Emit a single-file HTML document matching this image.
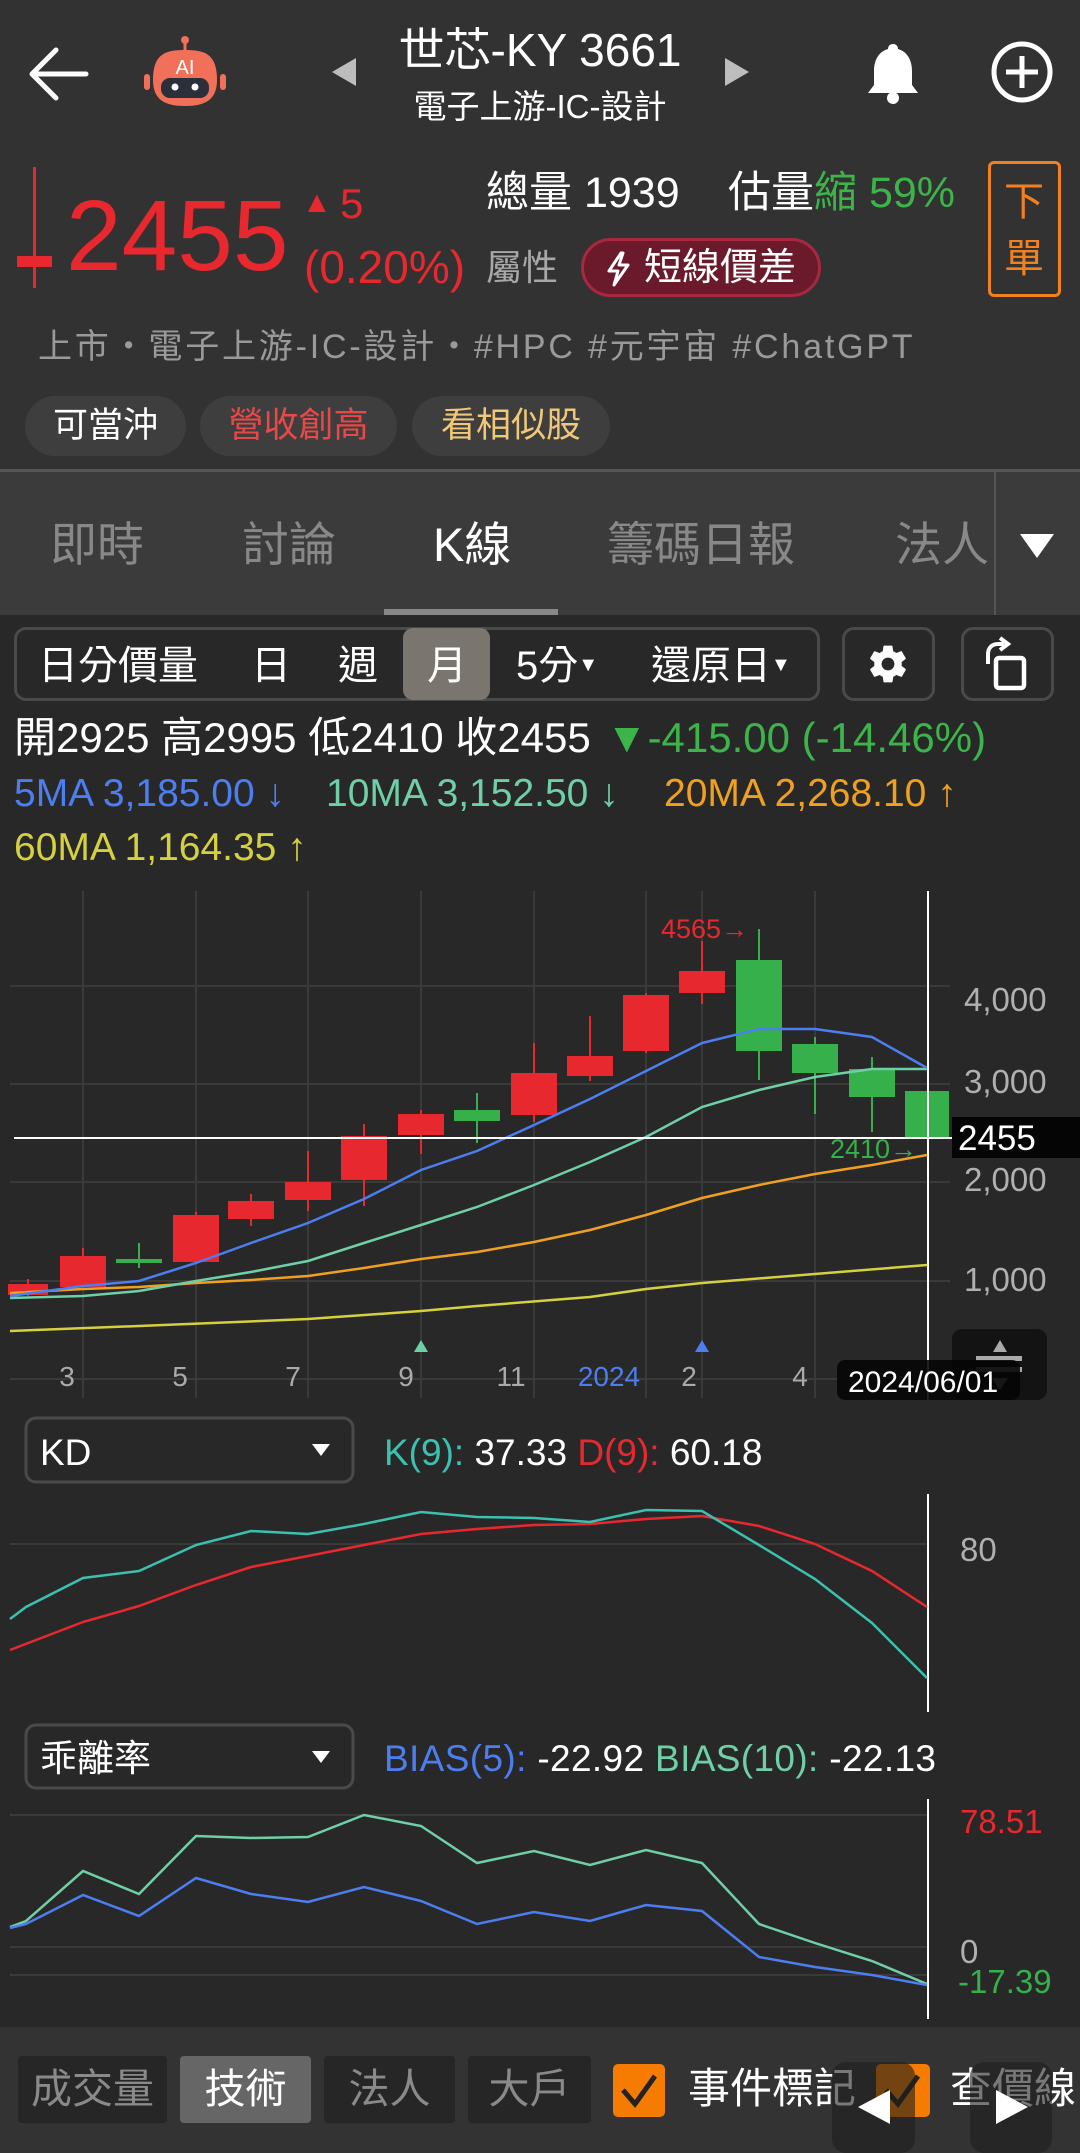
<!DOCTYPE html>
<html><head><meta charset="utf-8">
<style>
*{margin:0;padding:0;box-sizing:border-box}
body{width:1080px;height:2153px;background:#282828;position:relative;overflow:hidden;font-family:"Liberation Sans","Noto Sans CJK TC",sans-serif;color:#fff}
.a{position:absolute;line-height:1;white-space:nowrap}
.top{position:absolute;left:0;top:0;width:1080px;height:470px;background:#323232}
.tabs{position:absolute;left:0;top:469px;width:1080px;height:146px;background:#3b3b3b;border-top:3px solid #555}
.chip{position:absolute;top:396px;height:60px;border-radius:30px;background:#3e3e3e;font-size:35px;line-height:60px;text-align:center}
.box{position:absolute;border:3px solid #4a4a4a;border-radius:12px}
.bb{position:absolute;top:2056px;height:67px;background:#262626;border-radius:4px;font-size:41px;line-height:67px;text-align:center;color:#8a8a8a}
</style></head><body>
<div class="top"></div>
<svg class="a" style="left:26px;top:46px" width="64" height="56" viewBox="0 0 64 56"><path d="M60 28H8M30 4L6 28L30 52" stroke="#fff" stroke-width="5" fill="none" stroke-linecap="round" stroke-linejoin="round"/></svg>
<svg class="a" style="left:140px;top:34px" width="90" height="80" viewBox="0 0 90 80">
<line x1="45" y1="6" x2="45" y2="18" stroke="#f0705a" stroke-width="3"/><circle cx="45" cy="6" r="4" fill="#f0705a"/>
<rect x="4" y="40" width="6" height="16" rx="3" fill="#f0705a"/><rect x="80" y="40" width="6" height="16" rx="3" fill="#f0705a"/>
<path d="M13 46 C13 20 25 16 45 16 C65 16 77 20 77 46 C77 66 65 72 45 72 C25 72 13 66 13 46Z" fill="#f0705a"/>
<rect x="21" y="44" width="48" height="20" rx="9" fill="#2b2f3a"/><circle cx="35" cy="53" r="3.5" fill="#fff"/><circle cx="55" cy="53" r="3.5" fill="#fff"/>
<text x="45" y="40" font-size="20" fill="#fff" text-anchor="middle" font-family="Liberation Sans">AI</text></svg>
<svg class="a" style="left:330px;top:56px" width="28" height="32"><path d="M26 2L2 16L26 30Z" fill="#bdbdbd"/></svg>
<svg class="a" style="left:723px;top:56px" width="28" height="32"><path d="M2 2L26 16L2 30Z" fill="#bdbdbd"/></svg>
<div class="a" style="left:380px;width:320px;text-align:center;top:27px;font-size:46px">世芯-KY 3661</div>
<div class="a" style="left:380px;width:320px;text-align:center;top:90px;font-size:33px">電子上游-IC-設計</div>
<svg class="a" style="left:864px;top:40px" width="58" height="66" viewBox="0 0 58 66"><path d="M29 4c3 0 5 2 5 5c10 3 14 12 14 22v14l6 8H4l6-8V31c0-10 4-19 14-22c0-3 2-5 5-5z" fill="#fff"/><circle cx="29" cy="58" r="6" fill="#fff"/></svg>
<svg class="a" style="left:990px;top:40px" width="64" height="64"><circle cx="32" cy="32" r="28" stroke="#fff" stroke-width="5" fill="none"/><path d="M32 16V48M16 32H48" stroke="#fff" stroke-width="5"/></svg>

<div class="a" style="left:33px;top:167px;width:3px;height:121px;background:#e8282f"></div>
<div class="a" style="left:17px;top:256px;width:35px;height:11px;background:#e8282f"></div>
<div class="a" style="left:66px;top:186px;font-size:100px;color:#e8282f">2455</div>
<div class="a" style="left:302px;top:188px;font-size:30px;color:#e8282f">▲</div>
<div class="a" style="left:340px;top:183px;font-size:42px;color:#e8282f">5</div>
<div class="a" style="left:304px;top:244px;font-size:46px;color:#e8282f">(0.20%)</div>
<div class="a" style="left:486px;top:250px;font-size:36px;color:#a8a8a8">屬性</div>
<div class="a" style="left:581px;top:238px;width:240px;height:59px;border-radius:30px;background:#6b1a2c;border:3px solid #a8283f"></div>
<svg class="a" style="left:604px;top:251px" width="28" height="36" viewBox="0 0 28 36"><path d="M17 2L5 20H14L10 34L24 14H15L19 2Z" stroke="#fff" stroke-width="3" fill="none" stroke-linejoin="round"/></svg>
<div class="a" style="left:644px;top:249px;font-size:38px">短線價差</div>
<div class="a" style="left:486px;top:172px;font-size:43px">總量 1939</div>
<div class="a" style="left:728px;top:172px;font-size:43px">估量<span style="color:#3cb44a">縮 59%</span></div>
<div class="a" style="left:988px;top:161px;width:73px;height:136px;border:3px solid #f08020;border-radius:6px"></div>
<div class="a" style="left:1004px;top:182px;font-size:40px;color:#f08020">下</div>
<div class="a" style="left:1004px;top:239px;font-size:40px;color:#f08020">單</div>
<div class="a" style="left:38px;top:330px;font-size:34px;letter-spacing:2.8px;color:#9a9a9a">上市・電子上游-IC-設計・#HPC #元宇宙 #ChatGPT</div>
<div class="chip" style="left:25px;width:161px">可當沖</div>
<div class="chip" style="left:200px;width:197px;color:#e84848">營收創高</div>
<div class="chip" style="left:412px;width:198px;color:#f0c878">看相似股</div>

<div class="tabs"></div>
<div class="a" style="left:50px;top:521px;font-size:47px;color:#888">即時</div>
<div class="a" style="left:242px;top:521px;font-size:47px;color:#888">討論</div>
<div class="a" style="left:433px;top:521px;font-size:47px;color:#fff">K線</div>
<div class="a" style="left:607px;top:521px;font-size:47px;color:#888">籌碼日報</div>
<div class="a" style="left:895px;top:521px;font-size:47px;color:#888">法人</div>
<div class="a" style="left:994px;top:471px;width:2px;height:144px;background:#555"></div>
<svg class="a" style="left:1018px;top:532px" width="38" height="28"><path d="M2 2H36L19 26Z" fill="#fff"/></svg>
<div class="a" style="left:384px;top:609px;width:174px;height:6px;background:#888"></div>

<div class="box" style="left:14px;top:627px;width:806px;height:74px"></div>
<div class="a" style="left:403px;top:628px;width:87px;height:72px;background:#7b7570;border-radius:10px"></div>
<div class="a" style="left:38px;top:646px;font-size:40px">日分價量</div>
<div class="a" style="left:251px;top:646px;font-size:40px">日</div>
<div class="a" style="left:338px;top:646px;font-size:40px">週</div>
<div class="a" style="left:427px;top:646px;font-size:40px">月</div>
<div class="a" style="left:516px;top:646px;font-size:40px">5分<span style="font-size:20px;vertical-align:8px">▼</span></div>
<div class="a" style="left:651px;top:646px;font-size:40px">還原日<span style="font-size:20px;vertical-align:8px">▼</span></div>
<div class="box" style="left:842px;top:627px;width:93px;height:74px"></div>
<svg class="a" style="left:866px;top:642px" width="44" height="44" viewBox="0 0 24 24"><path fill="#fff" d="M19.4 13c.04-.33.06-.66.06-1s-.02-.67-.06-1l2.1-1.650c.2-.15.24-.42.12-.64l-2-3.460c-.12-.22-.39-.3-.61-.22l-2.490 1c-.52-.4-1.080-.73-1.690-.98l-.38-2.650C14.460 2.180 14.250 2 14 2h-4c-.25 0-.46.18-.49.42l-.38 2.650c-.61.25-1.170.59-1.690.98l-2.490-1c-.23-.09-.49 0-.61.22l-2 3.460c-.13.22-.07.49.12.64L4.570 11c-.04.33-.07.66-.07 1s.03.67.07 1l-2.110 1.650c-.19.15-.24.42-.12.64l2 3.460c.12.22.39.3.61.22l2.490-1c.52.4 1.080.73 1.690.98l.38 2.650c.03.24.24.42.49.42h4c.25 0 .46-.18.49-.42l.38-2.650c.61-.25 1.170-.59 1.690-.98l2.490 1c.23.09.49 0 .61-.22l2-3.460c.12-.22.07-.49-.12-.64L19.400 13zM12 15.500c-1.930 0-3.500-1.570-3.500-3.500s1.570-3.500 3.500-3.500 3.500 1.570 3.500 3.500-1.570 3.500-3.500 3.500z"/></svg>
<div class="box" style="left:961px;top:627px;width:93px;height:74px"></div>
<svg class="a" style="left:982px;top:636px" width="52" height="56" viewBox="0 0 52 56"><rect x="14" y="22" width="28" height="30" rx="3" stroke="#fff" stroke-width="4.5" fill="none"/><path d="M6 28V18C6 12 10 8 16 8H22" stroke="#fff" stroke-width="4" fill="none"/><path d="M18 2L26 8L18 14" stroke="#fff" stroke-width="4" fill="none"/></svg>

<div class="a" style="left:14px;top:717px;font-size:42px">開2925 高2995 低2410 收2455</div>
<div class="a" style="left:606px;top:717px;font-size:42px;color:#3cb44a">▼-415.00 (-14.46%)</div>
<div class="a" style="left:14px;top:774px;font-size:39px;color:#4d7ef0">5MA 3,185.00 ↓</div>
<div class="a" style="left:326px;top:774px;font-size:39px;color:#6fcfa6">10MA 3,152.50 ↓</div>
<div class="a" style="left:664px;top:774px;font-size:39px;color:#f0a020">20MA 2,268.10 ↑</div>
<div class="a" style="left:14px;top:828px;font-size:39px;color:#d4d040">60MA 1,164.35 ↑</div>

<svg class="a" style="left:0;top:0" width="1080" height="2153" viewBox="0 0 1080 2153" font-family="Liberation Sans">
<g stroke="#3a3a3a" stroke-width="2">
<line x1="83" y1="891" x2="83" y2="1398"/><line x1="196" y1="891" x2="196" y2="1398"/><line x1="308" y1="891" x2="308" y2="1398"/><line x1="421" y1="891" x2="421" y2="1398"/><line x1="534" y1="891" x2="534" y2="1398"/><line x1="646" y1="891" x2="646" y2="1398"/><line x1="702" y1="891" x2="702" y2="1398"/><line x1="815" y1="891" x2="815" y2="1398"/>
<line x1="10" y1="986" x2="950" y2="986"/><line x1="10" y1="1084" x2="950" y2="1084"/><line x1="10" y1="1182" x2="950" y2="1182"/><line x1="10" y1="1281" x2="950" y2="1281"/><line x1="10" y1="1379" x2="950" y2="1379"/>
<line x1="10" y1="1544" x2="928" y2="1544"/>
<line x1="10" y1="1815" x2="928" y2="1815"/><line x1="10" y1="1947" x2="928" y2="1947"/><line x1="10" y1="1975" x2="928" y2="1975"/>
</g>
<g stroke-width="2">
<g fill="#e8282f" stroke="#e8282f">
<line x1="28" y1="1279" x2="28" y2="1296"/><rect x="9" y="1285" width="38" height="9"/>
<line x1="83" y1="1248" x2="83" y2="1286"/><rect x="61" y="1257" width="44" height="29"/>
<line x1="196" y1="1212" x2="196" y2="1261"/><rect x="174" y="1216" width="44" height="45"/>
<line x1="251" y1="1194" x2="251" y2="1226"/><rect x="229" y="1202" width="44" height="16"/>
<line x1="308" y1="1151" x2="308" y2="1211"/><rect x="286" y="1183" width="44" height="16"/>
<line x1="364" y1="1124" x2="364" y2="1206"/><rect x="342" y="1137" width="44" height="42"/>
<line x1="421" y1="1110" x2="421" y2="1154"/><rect x="399" y="1115" width="44" height="19"/>
<line x1="534" y1="1043" x2="534" y2="1122"/><rect x="512" y="1074" width="44" height="40"/>
<line x1="590" y1="1016" x2="590" y2="1081"/><rect x="568" y="1057" width="44" height="18"/>
<line x1="646" y1="993" x2="646" y2="1053"/><rect x="624" y="996" width="44" height="54"/>
<line x1="702" y1="941" x2="702" y2="1004"/><rect x="680" y="972" width="44" height="20"/>
</g>
<g fill="#36b04a" stroke="#36b04a">
<line x1="139" y1="1243" x2="139" y2="1268"/><rect x="117" y="1260" width="44" height="2"/>
<line x1="477" y1="1093" x2="477" y2="1143"/><rect x="455" y="1111" width="44" height="9"/>
<line x1="759" y1="929" x2="759" y2="1080"/><rect x="737" y="961" width="44" height="89"/>
<line x1="815" y1="1037" x2="815" y2="1114"/><rect x="793" y="1045" width="44" height="27"/>
<line x1="872" y1="1057" x2="872" y2="1132"/><rect x="850" y="1070" width="44" height="26"/>
<rect x="906" y="1092" width="42" height="45"/>
</g></g>
<g fill="none" stroke-width="2.5">
<polyline stroke="#d4d040" points="10,1331 139,1326 308,1319 421,1311 477,1306 590,1297 646,1289 702,1283 927,1265"/>
<polyline stroke="#f0a020" points="10,1293 83,1289 139,1287 196,1283 251,1280 308,1276 364,1268 421,1259 477,1252 534,1242 590,1230 646,1215 702,1198 759,1185 815,1174 872,1165 927,1155"/>
<polyline stroke="#6fcfa6" points="10,1298 83,1296 139,1291 196,1281 251,1272 308,1261 364,1243 421,1225 477,1207 534,1185 590,1162 646,1137 702,1107 759,1090 815,1077 872,1069 927,1069"/>
<polyline stroke="#4d7ef0" points="10,1296 83,1286 139,1281 196,1263 251,1243 308,1223 364,1199 421,1170 477,1151 534,1125 590,1099 646,1071 702,1043 759,1029 815,1029 872,1037 927,1068"/>
</g>
<line x1="14" y1="1138" x2="952" y2="1138" stroke="#fff" stroke-width="2"/>
<line x1="928" y1="891" x2="928" y2="1400" stroke="#fff" stroke-width="2"/>
<text x="661" y="938" font-size="27" fill="#e8282f">4565→</text>
<text x="830" y="1158" font-size="27" fill="#36b04a">2410→</text>
<path d="M414 1352L421 1340L428 1352Z" fill="#6fcfa6"/><path d="M695 1352L702 1340L709 1352Z" fill="#4d7ef0"/>
<g font-size="33" fill="#b0b0b0"><text x="964" y="1011">4,000</text><text x="964" y="1093">3,000</text><text x="964" y="1191">2,000</text><text x="964" y="1291">1,000</text></g>
<rect x="952" y="1117" width="128" height="41" fill="#050505"/><text x="958" y="1150" font-size="35" fill="#fff">2455</text>
<g font-size="28" fill="#aaa" text-anchor="middle"><text x="67" y="1386">3</text><text x="180" y="1386">5</text><text x="293" y="1386">7</text><text x="406" y="1386">9</text><text x="511" y="1386">11</text><text x="609" y="1386" fill="#4d7ef0">2024</text><text x="689" y="1386">2</text><text x="800" y="1386">4</text></g>
<rect x="952" y="1329" width="95" height="71" rx="10" fill="#111" opacity="0.9"/>
<path d="M993 1352L1000 1340L1007 1352Z M1008 1378L1000 1390L992 1378Z" fill="#aaa"/>
<rect x="976" y="1356" width="46" height="5" fill="#aaa"/><rect x="976" y="1367" width="46" height="5" fill="#aaa"/>
<rect x="837" y="1360" width="183" height="40" rx="8" fill="#050505" opacity="0.9"/>
<text x="848" y="1392" font-size="30" fill="#fff">2024/06/01</text>

<rect x="26" y="1418" width="327" height="64" rx="10" fill="none" stroke="#4a4a4a" stroke-width="3"/>
<text x="40" y="1465" font-size="37" fill="#fff">KD</text>
<path d="M312 1444H330L321 1456Z" fill="#fff"/>
<text x="384" y="1465" font-size="37" fill="#fff"><tspan fill="#3cc0b0">K(9):</tspan> 37.33 <tspan fill="#e8282f">D(9):</tspan> 60.18</text>
<line x1="928" y1="1494" x2="928" y2="1712" stroke="#fff" stroke-width="2"/>
<text x="960" y="1561" font-size="33" fill="#b0b0b0">80</text>
<polyline fill="none" stroke="#e8282f" stroke-width="2.5" points="10,1650 83,1622 139,1606 196,1585 251,1567 308,1556 364,1545 421,1534 477,1529 534,1525 590,1524 646,1519 702,1516 759,1526 815,1544 872,1571 927,1607"/>
<polyline fill="none" stroke="#3cc0b0" stroke-width="2.5" points="10,1619 26,1607 83,1578 139,1571 196,1545 251,1531 308,1534 364,1524 421,1512 477,1517 534,1518 590,1522 646,1510 702,1511 759,1545 815,1579 872,1623 927,1678"/>

<rect x="26" y="1725" width="327" height="63" rx="10" fill="none" stroke="#4a4a4a" stroke-width="3"/>
<text x="40" y="1771" font-size="37" fill="#fff" font-family="Liberation Sans,Noto Sans CJK TC">乖離率</text>
<path d="M312 1751H330L321 1763Z" fill="#fff"/>
<text x="384" y="1771" font-size="37" fill="#fff" textLength="552" lengthAdjust="spacing"><tspan fill="#4d7ef0">BIAS(5):</tspan>  -22.92 <tspan fill="#6fcfa6">BIAS(10):</tspan>  -22.13</text>
<line x1="928" y1="1799" x2="928" y2="2019" stroke="#fff" stroke-width="2"/>
<text x="960" y="1833" font-size="33" fill="#e8282f">78.51</text>
<text x="960" y="1963" font-size="33" fill="#b0b0b0">0</text>
<text x="958" y="1993" font-size="33" fill="#36b04a">-17.39</text>
<polyline fill="none" stroke="#6fcfa6" stroke-width="2.5" points="10,1927 26,1921 83,1871 139,1894 196,1836 251,1838 308,1837 364,1815 421,1826 477,1863 534,1851 590,1865 646,1850 702,1863 759,1924 815,1943 872,1961 927,1984"/>
<polyline fill="none" stroke="#4d7ef0" stroke-width="2.5" points="10,1928 26,1924 83,1895 139,1916 196,1878 251,1894 308,1902 364,1887 421,1901 477,1924 534,1912 590,1921 646,1905 702,1911 759,1957 815,1967 872,1975 927,1985"/>
</svg>

<div class="a" style="left:0;top:2027px;width:1080px;height:126px;background:#333"></div>
<div class="bb" style="left:18px;width:149px">成交量</div>
<div class="bb" style="left:180px;width:131px;background:#666;color:#fff">技術</div>
<div class="bb" style="left:324px;width:131px">法人</div>
<div class="bb" style="left:468px;width:123px">大戶</div>
<div class="a" style="left:613px;top:2064px;width:52px;height:53px;background:#f57c00;border-radius:5px"></div>
<svg class="a" style="left:613px;top:2064px" width="52" height="53"><path d="M10 26L22 40L42 12" stroke="#222" stroke-width="5" fill="none"/></svg>
<div class="a" style="left:688px;top:2068px;font-size:42px">事件標記</div>
<div class="a" style="left:876px;top:2064px;width:54px;height:53px;background:#f57c00;border-radius:5px"></div>
<svg class="a" style="left:876px;top:2064px" width="54" height="53"><path d="M10 26L22 40L42 12" stroke="#222" stroke-width="5" fill="none"/></svg>
<div class="a" style="left:950px;top:2068px;font-size:42px">查價線</div>
<div class="a" style="left:832px;top:2062px;width:83px;height:91px;background:rgba(30,30,30,0.6);border-radius:14px"></div>
<div class="a" style="left:970px;top:2062px;width:82px;height:91px;background:rgba(30,30,30,0.6);border-radius:14px"></div>
<svg class="a" style="left:856px;top:2088px" width="36" height="38"><path d="M34 2L2 19L34 36Z" fill="#fff"/></svg>
<svg class="a" style="left:994px;top:2088px" width="36" height="38"><path d="M2 2L34 19L2 36Z" fill="#fff"/></svg>
</body></html>
